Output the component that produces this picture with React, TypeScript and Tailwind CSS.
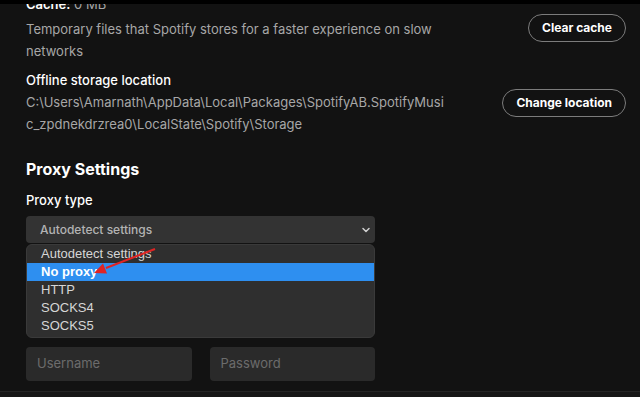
import { ChevronDown } from "lucide-react";

const options = ["Autodetect settings", "No proxy", "HTTP", "SOCKS4", "SOCKS5"];

export default function App() {
  return (
    <div className="w-[640px] h-[397px] overflow-hidden bg-[#121212] flex flex-col font-['Inter',sans-serif] text-[13px]">
      <div className="h-[4px] bg-black shrink-0 relative z-10" />

      <div className="flex-1 pl-[26px] pr-[14px] -mt-[11px]">
        {/* CACHE */}
        <div className="flex items-start justify-between">
          <div className="leading-[22px] text-[#a7a7a7]">
            <div className="mb-[3px]">
              <span className="text-white font-semibold">Cache:</span> 0 MB
            </div>
            <div>Temporary files that Spotify stores for a faster experience on slow</div>
            <div>networks</div>
          </div>
          <button className="h-[28px] px-[13px] rounded-full border border-[#7c7c7c] text-white font-bold text-[12px] mt-[21px]">
            Clear cache
          </button>
        </div>

        {/* STORAGE */}
        <div className="flex items-center justify-between mt-[7px]">
          <div className="leading-[22px] text-[#a7a7a7]">
            <div className="text-white font-medium">Offline storage location</div>
            <div>C:\Users\Amarnath\AppData\Local\Packages\SpotifyAB.SpotifyMusi</div>
            <div>c_zpdnekdrzrea0\LocalState\Spotify\Storage</div>
          </div>
          <button className="h-[28px] px-[13px] rounded-full border border-[#7c7c7c] text-white font-bold text-[12px] mt-[2px]">
            Change location
          </button>
        </div>

        {/* PROXY */}
        <h2 className="text-white font-bold text-[16px] mt-[23px] leading-[22px]">Proxy Settings</h2>
        <div className="text-white font-medium mt-[10px] leading-[20px]">Proxy type</div>

        <div className="relative w-[349px] mt-[6px]">
          <div className="h-[27px] bg-[#333333] rounded-[4px] flex items-center justify-between pl-[14px] pr-[3px]">
            <span className="text-[#b3b3b3] font-medium text-[12px]">Autodetect settings</span>
            <ChevronDown size={12} strokeWidth={3} className="text-[#d0d0d0]" />
          </div>

          <div className="absolute left-0 top-[28px] w-full h-[94px] bg-[#2f2f2f] border border-[#3a3a3a] rounded-[6px] font-['Liberation_Sans',sans-serif] text-[13px] z-10">
            {options.map(o => (
              <div
                key={o}
                className={
                  o === "No proxy"
                    ? "h-[18px] leading-[18px] pl-[14px] bg-[#2e8ff0] text-white font-bold"
                    : "h-[18px] leading-[18px] pl-[14px] text-[#d6d6d6]"
                }
              >
                {o}
              </div>
            ))}
          </div>

          {/* red annotation arrow */}
          <svg className="absolute left-0 top-0 z-20 overflow-visible" width="349" height="120">
            <line x1="129" y1="33" x2="80" y2="52" stroke="#e02424" strokeWidth="2" />
            <polygon points="68,57 81,57.5 77,47.5" fill="#e02424" />
          </svg>
        </div>

        <div className="flex gap-[18px] mt-[104px] w-[349px]">
          <div className="flex-1 h-[34px] bg-[#2a2a2a] rounded-[4px] flex items-center pl-[11px] text-[#6c6c6c]">Username</div>
          <div className="flex-1 h-[34px] bg-[#2a2a2a] rounded-[4px] flex items-center pl-[11px] text-[#6c6c6c]">Password</div>
        </div>
      </div>

      <div className="h-[6px] bg-[#161616] border-t border-[#242424] shrink-0" />
    </div>
  );
}
